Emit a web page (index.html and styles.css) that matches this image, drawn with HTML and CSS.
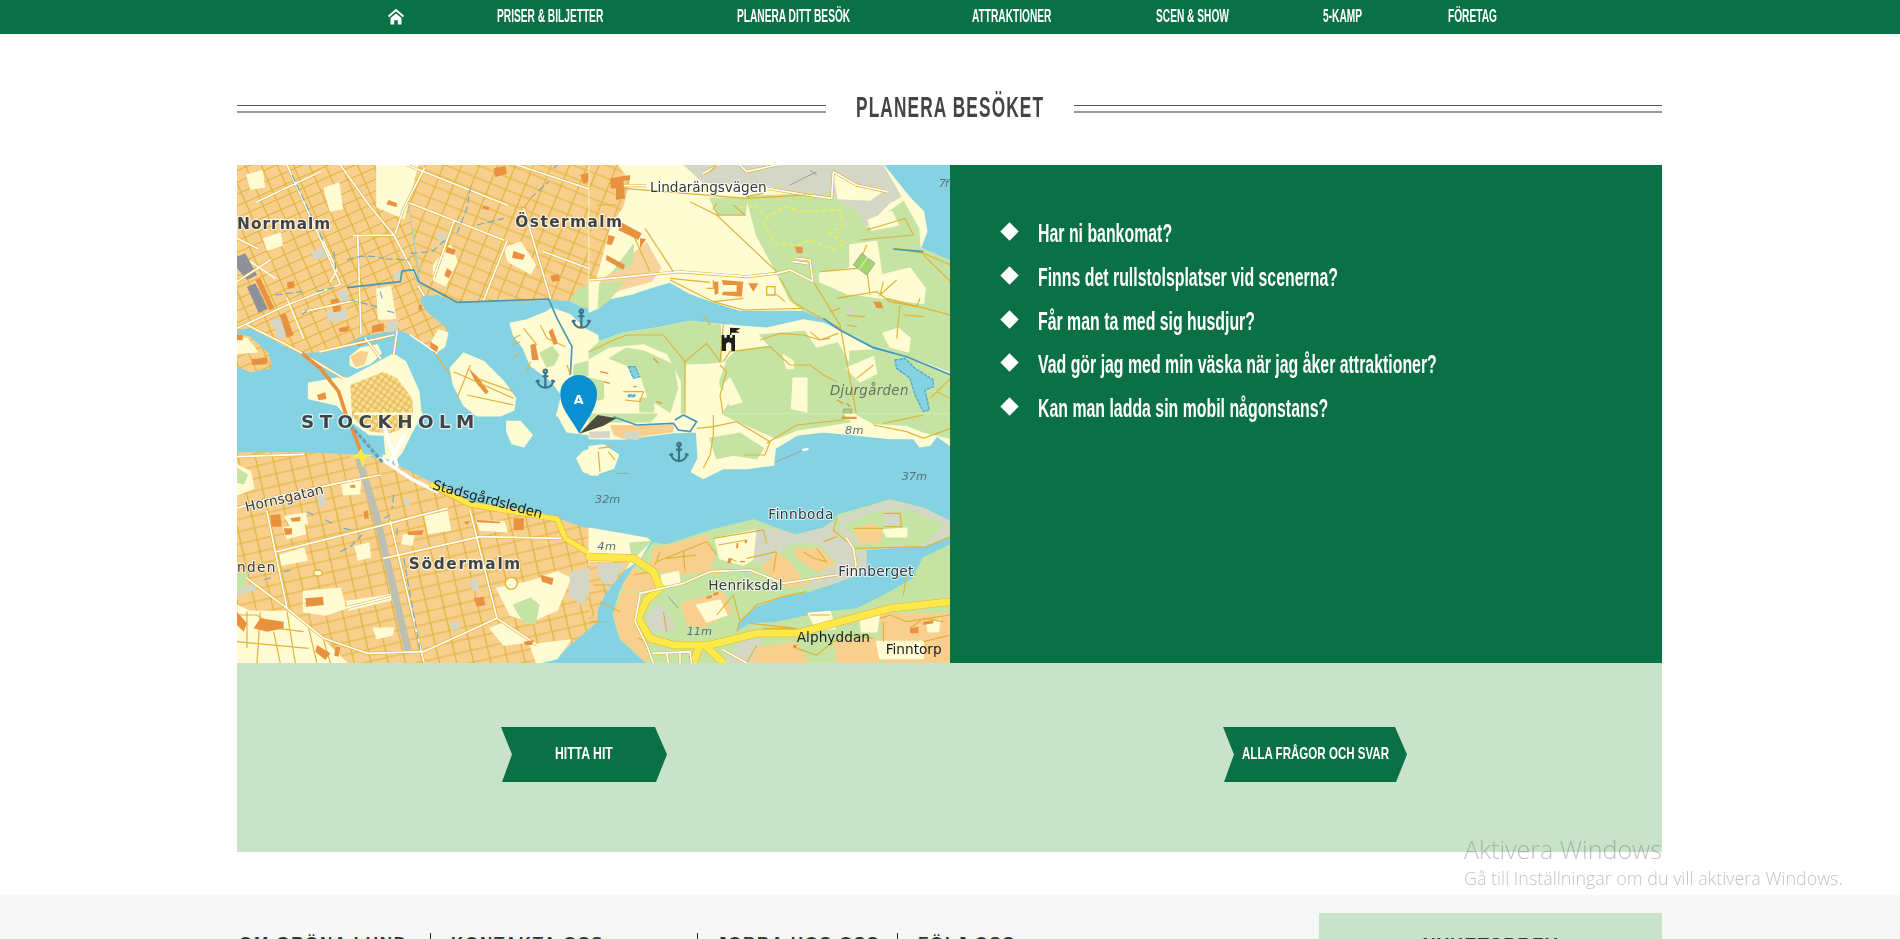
FILE: index.html
```html
<!DOCTYPE html>
<html lang="sv">
<head>
    <meta charset="UTF-8">
    <meta name="viewport" content="width=device-width, initial-scale=1.0">
    <title>Planera besöket</title>
    <link rel="stylesheet" href="styles.css">
</head>
<body>
    <nav class="top-nav">
        <a class="home-link" href="#">
            <svg viewBox="0 0 18 17" width="18" height="17">
                <path d="M1.500 8.500 9 2l7.500 6.500" class="home-roof"/>
                <path d="M3.500 10 9 5.500 14.500 10v6.500h-3.700v-4.300H7.200v4.300H3.500z" class="home-body"/>
            </svg>
        </a>
        <a href="#"><span class="squeeze">PRISER &amp; BILJETTER</span></a>
        <a href="#"><span class="squeeze">PLANERA DITT BESÖK</span></a>
        <a href="#"><span class="squeeze">ATTRAKTIONER</span></a>
        <a href="#"><span class="squeeze">SCEN &amp; SHOW</span></a>
        <a href="#"><span class="squeeze">5-KAMP</span></a>
        <a href="#"><span class="squeeze">FÖRETAG</span></a>
    </nav>

    <main class="content">
        <header class="section-head">
            <div class="rule"></div>
            <h1><span class="squeeze">PLANERA BESÖKET</span></h1>
            <div class="rule"></div>
        </header>

        <section class="info">
            <div class="map">
                <svg viewBox="0 0 2139 1494" width="713" height="498">
                    <defs>
                        <pattern id="gridN" width="44" height="32" patternUnits="userSpaceOnUse" patternTransform="rotate(-24)">
                            <rect width="44" height="32" fill="#f8cf8d"/>
                            <path d="M0 16H44M22 0V32" fill="none" stroke="#dfb338" stroke-width="3.500"/>
                        </pattern>
                        <pattern id="gridO" width="50" height="36" patternUnits="userSpaceOnUse" patternTransform="rotate(22)">
                            <rect width="50" height="36" fill="#f8cf8d"/>
                            <path d="M0 18H50M25 0V36" fill="none" stroke="#dfb338" stroke-width="3.500"/>
                        </pattern>
                        <pattern id="gridS" width="50" height="36" patternUnits="userSpaceOnUse" patternTransform="rotate(-13)">
                            <rect width="50" height="36" fill="#f8cf8d"/>
                            <path d="M0 18H50M25 0V36" fill="none" stroke="#dfb338" stroke-width="3.500"/>
                        </pattern>
                        <pattern id="gridG" width="16" height="16" patternUnits="userSpaceOnUse" patternTransform="rotate(35)">
                            <rect width="16" height="16" fill="#f8dc98"/>
                            <path d="M0 8H16M8 0V16" fill="none" stroke="#dfb338" stroke-width="3"/>
                        </pattern>
                        <symbol id="anchor" viewBox="0 0 60 66" overflow="visible">
                            <circle cx="30" cy="7" r="5.500" class="anchor-line"/>
                            <path d="M30 13V60M20 23H40M4 36c2 16 14 24 26 24s24-8 26-24M4 36l-3 7M4 36l7 4M56 36l3 7M56 36l-7 4" class="anchor-line"/>
                        </symbol>
                        <path id="roadsN" d="M150 0L290 310L310 358M310 0L400 125L470 210L545 350M510 0L810 120M840 0L1082 80M520 115L800 225M860 130L940 400M0 490L150 420L310 358M350 212L470 210M362 210L372 505M562 10L500 130L475 205M650 170L590 340M810 228L740 405M30 480L150 540L195 565L320 640M0 350L100 285M250 560L470 510M480 500L470 570M385 520L430 580M920 260L1082 320M60 110L250 20M200 440L360 405M545 365L560 390M0 220L60 250M260 230L300 315L280 350"/>
                        <path id="roadsG" d="M-2 345L60 340L270 320L470 335L560 325L600 315L670 350M100 62H170M530 70L650 90L725 100L730 20L800 60L890 80M340 25L385 0M450 0L470 20L560 0M620 280L660 285L668 345M610 290L650 295"/>
                        <path id="roadsS" d="M-2 125L200 118M-2 280L120 245L300 205L430 180M90 290L150 580M120 410L420 335L630 280M440 430L730 365L970 370M460 320L560 740M700 290L780 610M30 490L150 580L260 670L390 715L560 710L780 610L900 690M330 578L460 545M250 555L200 570"/>
                        <path id="roadsH" d="M150 535L280 505L360 470L480 465L580 505L740 480M790 400L798 450L790 480M770 370L790 400M150 540L135 620L170 690L190 744M190 715L300 710L305 744M230 715L235 744M270 712V744M400 705L470 744"/>
                        <path id="yellowS" d="M580 208L700 268L960 312L985 370L1082 430"/>
                        <path id="yellowH" d="M1082 560L900 580L750 620L620 655L500 655L360 690L250 690L180 670L145 610L170 555L210 520L190 470L130 430L-2 425M330 690L310 744M350 695L400 744"/>
                    </defs>

                    <rect width="2139" height="1494" class="water"/>

                    <!-- norrmalm, ostermalm -->
                    <g>
                        <path fill="url(#gridN)" d="M0 0H500L545 350L555 392L550 410L575 445L630 490L625 530L600 565L575 545L520 510L490 497L450 500L400 510L370 515L320 545L270 560L200 565L150 548L90 515L40 490L0 495Z"/>
                        <path fill="url(#gridO)" d="M500 0H1082V404L1000 408L940 405L660 415L600 390L555 392Z"/>
                        <path fill="url(#gridN)" d="M0 505L40 515L95 565L105 610L40 622L0 605Z"/>
                        <path class="land" d="M0 525L30 520L60 560L0 565ZM420 0H542L500 160L420 125ZM30 30L75 18L82 65L42 72ZM262 70L305 55L316 130L280 138ZM80 222L130 205L135 240L92 255ZM420 372L460 365L475 460L425 462ZM590 300L640 240L660 290L625 362L590 345ZM802 250L850 232L895 300L880 325L815 290ZM585 530L605 495L632 505L622 545L600 560Z"/>
                        <path class="park" d="M1020 378L1060 355L1082 360V432L1040 425L1000 408Z"/>
                        <path class="land" d="M340 575L370 550L420 540L432 565L400 595L360 610L340 600Z"/>
                        <path class="urban" d="M340 575L370 558L395 560L382 600L355 606Z"/>
                        <path class="land" d="M215 655L300 640L335 640L470 568L505 590L545 680L552 752H330L300 720L215 700Z"/>
                        <path fill="url(#gridG)" d="M340 660L440 620L480 640L525 700L530 752H345Z"/>
                        <path class="land" d="M640 610L680 565L740 590L800 650L835 700L830 735L790 752H720L680 720L650 660ZM820 475L870 465L930 440L945 430L1000 450L1040 490L1082 512V752H960L975 690L945 650L880 600L860 550L830 510Z"/>
                        <path class="park" d="M910 565L945 545L965 570L950 600L930 605ZM1012 600L1055 590L1060 630L1010 640Z"/>
                        <path class="gray-dark" d="M0 275L25 265L60 330L30 345L0 310ZM30 365L55 355L92 430L65 445Z"/>
                        <path class="gray" d="M222 258L262 248L272 275L232 285ZM300 380L332 372L335 410L310 412ZM448 470L482 465L482 498L450 500ZM600 205L625 205L625 228L605 228ZM265 440L330 430L330 465L275 470ZM470 322L490 320L490 345L470 345ZM100 465L130 455L150 512L125 525Z"/>
                        <path class="bld" d="M55 345L70 340L112 430L98 436ZM128 450L146 445L170 510L150 518ZM280 405L304 400L312 438L290 442ZM405 482L440 474L440 498L405 503ZM580 530L604 545L600 560L580 555ZM880 540L895 535L905 585L885 585ZM935 500L946 490L963 535L950 540ZM455 105L480 115L478 126L448 118ZM0 510L16 510L18 526L0 526ZM45 582L90 578L90 598L45 600ZM695 610L722 635L755 680L746 688L715 650ZM630 245L656 255L651 270L625 262ZM630 310L646 320L635 340L622 332ZM830 258L864 270L858 285L825 278ZM305 490L335 482L335 498L308 502ZM240 690L265 682L268 702L245 706ZM150 352L172 348L172 368L152 372ZM770 10L805 2L810 26L775 36ZM1030 30L1082 15L1082 36L1040 56ZM545 420L556 420L555 436L545 436ZM360 530L395 517L395 532L362 545ZM740 122L758 126L754 136L735 130ZM940 332L966 328L968 348L945 350Z"/>

                        <use href="#roadsN" class="casing"/>
                        <use href="#roadsN" class="road"/>
                        <path class="road-thin" d="M40 290L115 340M150 400L200 520M520 510L600 565"/>
                        <path class="street" d="M590 560L640 630"/>
                        <path class="major" d="M195 565L250 610L305 680L328 752"/>
                        <path class="canal" d="M330 368L490 350L495 318L530 315L545 350L660 412L935 402L960 460L1005 545L1000 630"/>
                        <path class="stream" d="M165 30L260 230M290 260L298 325M330 285Q380 265 440 280M445 282L520 285M520 265L585 260L625 225M660 205L690 130L700 70M720 180L800 160M115 390L195 380M240 380L300 365M340 405L420 425M450 438L480 445M430 380L435 400M195 450L210 435M880 100L935 50M950 10L960 0"/>
                        <path class="street" d="M850 565L830 575M828 540L850 530M830 520L850 510M880 590L870 620M990 600L1000 630M650 620L830 700M700 600L660 700M720 640L830 680M690 690L830 720M910 480L930 520L985 545M860 490L900 540M860 130L885 95M850 125L870 130"/>
                    </g>

                    <!-- djurgarden, gardet -->
                    <g transform="translate(1059,0)">
                        <path class="land" d="M-2 0H880L920 50L960 100L1000 140L1010 200L990 250L1082 290V625L950 570L850 540L750 490L700 460L640 435L560 435L450 435L370 410L300 385L240 350L190 365L130 385L60 400L20 430L-2 440Z"/>
                        <path class="land" d="M-2 510L30 530L100 505L200 490L300 470L400 480L530 490L640 465L700 475L750 500L850 555L950 580L1082 635V752H-2Z"/>
                        <path fill="url(#gridO)" d="M-2 0H85L120 50L100 125L60 190L20 340L-2 350Z"/>
                        <path class="urban-soft" d="M100 290L170 230L215 310L185 350L95 375L40 400L30 350Z"/>
                        <path class="park" d="M30 355L100 350L60 400L25 430ZM130 240L70 320L125 300Z"/>
                        <path class="gray" d="M280 0H880L935 95L900 115L830 185L800 140L735 105L650 90L530 62L340 55Z"/>
                        <path class="land" d="M730 20L800 60L880 75L840 105L745 100Z"/>
                        <path class="park" d="M360 100L470 100L465 150L385 150ZM470 95L650 88L735 105L800 140L830 190L940 110L985 190L990 250L1082 290V620L950 570L850 540L750 490L700 460L640 435L600 405L562 325L500 210Z"/>
                        <path class="park" d="M570 330L660 360L665 415L640 430L600 405ZM30 530L100 505L200 490L300 470L390 480L395 590L285 600L280 752H-2V560ZM420 560L540 545L600 600L620 752H400L390 650ZM510 510L640 500L740 530L790 620L800 752H620L600 610ZM780 560L850 555L950 580L1082 635V752H780Z"/>
                        <path class="land" d="M835 165L905 140L925 180L845 195ZM780 240L860 230L875 330L960 310L1005 370L1000 415L890 400L770 385L690 350L690 325L780 310ZM880 505L925 490L960 520L955 560L900 545ZM400 660L420 640L455 710L420 720ZM610 640L650 640L650 740L605 730ZM770 610L850 575L860 625L810 650ZM650 500L720 510L740 530L680 545ZM580 570L610 590L610 610L590 610ZM290 600L360 600L370 650L420 700L390 752H330Z"/>
                        <path class="land" d="M-2 585L60 550L160 540L230 570L270 650L270 752H-2Z"/>
                        <path class="park" d="M60 580L110 550L165 560L250 600L262 670L240 740L175 700L150 620L110 600ZM180 570L220 590L205 620L170 600ZM-2 640L40 650L40 700L-2 710ZM150 700L190 700L190 740L150 740Z"/>
                        <path class="land" d="M400 520L420 480L510 500L490 540L430 560L400 590Z"/>
                        <path class="street" d="M550 380L585 410"/>
                        <use href="#roadsG" class="casing-wide"/>
                        <use href="#roadsG" class="road"/>
                        <path class="street" d="M100 70L470 100L650 90M300 110L380 150L560 320M20 120L80 120M165 190L250 320M130 210L180 320M240 345L370 410L460 435L640 430L750 490M670 350L750 480L800 752M570 340L610 410L640 430M690 320L800 310L830 240M830 310L840 390M880 350L870 390L920 345M740 400L860 380L900 410L980 425L990 400M930 420L920 520M890 400L1082 450M940 450L1000 455M810 225L970 210L945 160L830 195M915 250L1000 265L1082 300M1000 270L1082 350M-2 560L60 530L110 510L220 510L285 590L350 535L390 590L400 480M285 590L285 752M400 590L420 560L540 545L600 600L660 600L700 630L740 650M390 600L410 620L390 690L400 752M510 525L570 505L640 510L690 525L745 505M660 500L690 525L720 520M800 640L850 600M1020 700L1082 640M1040 680L1080 700M340 450L360 480M370 345V370H350M240 340L360 352M370 410L460 400M100 680H160L150 710L105 705M720 440L750 430M770 450L810 455L825 455M770 480L800 485M360 20L380 0M380 115L370 130L385 148M430 120L465 150L380 150M470 95L520 85"/>
                        <path class="trail" d="M450 125L500 125L530 160L580 125L640 140L750 135L760 180L720 205L765 235L730 255L660 225L620 240L555 235L520 170"/>
                        <path class="gray-line" d="M600 60L680 20M660 15L680 30"/>
                        <path class="canal" d="M700 460L750 495L850 548L950 575L1082 630M910 252L1000 260"/>
                        <path class="pond" d="M915 585L945 580L975 610L1030 645L1030 665L1005 675L1018 735L1000 740L975 690L960 640L920 610Z"/>
                        <path class="bld" d="M62 40L120 30L120 45L100 48L105 100L78 105L78 70L62 72ZM90 170L155 205L145 225L85 195ZM50 270L105 300L100 315L48 285ZM150 220L168 222L150 250ZM55 210L75 215L65 240L50 238ZM615 245L638 245L638 265L620 265ZM395 345L460 350L455 395L395 390L400 380L440 380L440 360L400 360ZM475 355L505 355L490 380ZM370 350L385 350L385 385L375 390ZM850 410L872 410L880 430L860 430Z"/>
                        <path class="outline-box" d="M530 365H555V390H530Z"/>
                        <path d="M790 300L815 265L855 295L830 330Z" class="court"/>
                        <path d="M808 312L834 276" class="court-line"/>
                        <path class="gray" d="M770 430L780 420L790 440L780 450Z"/>
                        <path class="dots" d="M30 620L55 625M40 650L60 655M130 665L140 665M120 690L135 695M200 710L215 715M190 580L205 595M740 705L760 715M770 715L780 725"/>
                        <path class="pond" d="M115 605L135 605L150 635L130 640ZM115 690L135 690L135 695L115 695Z"/>
                        <path d="M760 732H785V745H760Z" class="court"/>
                        <path class="castle" d="M395 558V510H403V518H410V510H420V518H427V510H435V558H424V540A8 8 0 0 0 408 540V558Z"/>
                        <path class="castle" d="M420 510V488L452 490L438 497L450 503L424 503V510Z"/>
                    </g>

                    <!-- sodermalm -->
                    <g transform="translate(0,750)">
                        <path fill="url(#gridS)" d="M-2 112L200 112L340 118L430 130L480 150L590 205L700 268L860 298L960 310L1082 350V620L1000 690L960 730L900 745H-2Z"/>
                        <path class="land" d="M-2 570L40 590L150 590L215 640L260 675L330 745H-2ZM1082 95L1040 110L1020 130L1040 170L1082 180ZM810 20L850 20L885 60L860 95L825 85L810 50ZM960 -5L990 50L1082 62V-5Z"/>
                        <path class="land" d="M355 -5L555 -5L525 50L495 110L480 130L440 130L440 90L400 60L345 20Z"/>
                        <path fill="url(#gridG)" d="M345 0H530L500 40L460 55L400 50L360 22Z"/>
                        <path class="water" d="M370 60L440 62L445 120L390 110Z"/>
                        <path class="land" d="M315 205L370 195L368 235L320 240ZM145 305L205 295L210 325L160 332ZM140 340L200 325L205 355L150 370ZM565 305L630 290L640 345L575 355ZM130 420L200 400L210 435L135 450ZM355 395L395 385L400 425L365 435ZM780 520L880 500L960 470L1000 490L960 585L880 620L820 600ZM330 560L460 540L460 555L335 585ZM760 640L800 625L880 680L800 690ZM880 690L1000 675L960 730L900 745ZM200 530L310 520L325 580L265 600L200 590ZM500 360L530 360L525 390L495 385ZM720 320L800 320L810 350L730 345ZM410 640L470 640L465 660L420 670ZM0 150L40 170L50 220L0 240Z"/>
                        <path class="park" d="M830 570L880 550L905 570L895 625L860 620ZM-2 160L30 180L20 205L-2 200ZM-2 480L30 475L20 520L-2 530Z"/>
                        <path class="gray" d="M1000 470L1070 455L1082 500L1035 572L995 540ZM240 240L265 235L268 270L245 278ZM640 625L668 620L668 640L645 648ZM700 490L720 490L725 530L705 525ZM498 250L515 250L518 272L502 272ZM-2 525L50 505L60 525L-2 542Z"/>
                        <path class="rail" d="M365 130L420 310L515 715"/>
                        <use href="#roadsS" class="casing"/>
                        <use href="#roadsS" class="road"/>
                        <path class="road-wide" d="M430 130L520 190L600 230M440 30L480 150M500 60L460 140"/>
                        <path class="stream" d="M470 240L465 280M440 310L460 300M210 290L230 300M265 315L285 325M320 340L345 345M310 410L340 395L375 360M80 495L110 485M140 470L165 465M480 340V360M500 430L550 710"/>
                        <path class="major-short" d="M345 40L372 112"/>
                        <path class="rail-dash" d="M340 30L440 145"/>
                        <use href="#yellowS" class="casing-yellow"/>
                        <use href="#yellowS" class="highway"/>
                        <path class="star" d="M372 100L380 118L410 120L386 130L378 158L368 132L335 122L362 118Z"/>
                        <path class="street" d="M0 600H60L120 640L200 650M30 590V700M70 590L60 745M110 650L130 745M0 680L215 700M150 590L175 745M215 640L240 745M260 675L280 745"/>
                        <path class="bld" d="M100 300L130 298L134 335L104 335ZM205 550L258 545L260 570L208 575ZM70 610L140 620L140 640L90 650L50 640ZM295 695L310 695L305 725L292 722ZM240 690L280 715L265 735L235 710ZM340 210L355 210L355 218L340 218ZM680 320L700 318L690 330ZM720 315L790 320L790 325L720 322ZM830 310H860V345H830ZM510 350L560 345L555 360L515 360ZM710 550L740 545L745 570L720 575ZM0 590L30 625L20 650L0 630ZM140 340L165 340L165 358L145 360ZM160 310L190 305L190 318L165 320ZM860 680L890 675L885 690L865 690ZM910 480L950 490L945 510L915 500ZM380 290L392 285L395 310L383 312ZM825 435H850V445H825ZM800 435H812V455H800Z"/>
                        <path class="gold-circle" d="M230 474A13 9 0 1 1 256 474A13 9 0 1 1 230 474ZM805 505A18 18 0 1 1 841 505A18 18 0 1 1 805 505Z"/>
                    </g>

                    <!-- finnboda, henriksdal -->
                    <g transform="translate(1059,750)">
                        <path class="land" d="M-2 -2H1082V92L1040 62L1020 90L990 95L970 70L900 70L800 60L700 50L620 60L555 100L550 150L470 160L400 160L340 190L305 170L325 130L320 50L250 52L100 72L-2 70Z"/>
                        <path class="park" d="M360 70L450 55L520 100L500 130L430 120L380 130ZM400 -2L760 -2L780 20L620 45L560 70L470 30ZM800 -2H1082V70L1000 50L950 30L850 25ZM-2 -2H200L180 20L60 20L-2 30Z"/>
                        <path class="urban" d="M60 30L250 30L250 52L100 72L70 60Z"/>
                        <path class="gray" d="M-2 50L60 48L60 68L-2 70ZM100 52L150 50L145 75L110 72Z"/>
                        <path class="land" d="M40 90L85 120L70 160L10 180L-2 178V95Z"/>
                        <path class="land" d="M260 25A24 24 0 1 0 308 25A24 24 0 1 0 260 25Z"/>
                        <path class="canal" d="M70 5L140 30L250 25L265 45L300 50L320 20L280 0L255 15"/>
                        <path class="street" d="M370 0V60L360 120L340 160M320 40L370 35L440 20L540 80L525 120L460 120M530 85L620 30L760 15M850 30L950 50L1000 70L1082 40M760 15V0M880 25L1000 0M25 110L30 170M55 110L75 135M25 100L65 95"/>

                        <path class="park" d="M190 385L230 390L350 350L490 315L570 345L620 360L700 340L730 320L745 300L850 270L900 255L1000 280L1082 320V744H170L90 670L70 600L90 530L130 460L150 440Z"/>
                        <path class="land" d="M-2 340L170 370L180 378L150 430L110 460L-2 450Z"/>
                        <path class="park" d="M120 385L180 380L140 420L125 415Z"/>
                        <path fill="url(#gridS)" d="M-2 440L120 440L110 460L50 530L20 590L-2 622Z"/>
                        <path class="gray" d="M20 445L105 445L55 530L25 480Z"/>
                        <path class="urban" d="M95 530L150 535L140 610L170 680L175 744H170L90 670L70 600ZM95 510L130 460L190 480L200 525L105 530Z"/>
                        <path class="urban" d="M190 400L350 360L375 420L360 470L260 480L210 470L180 450Z"/>
                        <path class="land" d="M375 370L500 345L530 385L510 420L460 450L390 430ZM215 480L265 470L270 505L215 510Z"/>
                        <path class="gray" d="M570 345L620 360L700 340L730 320L745 360L770 380L830 410L830 470L750 500L660 525L640 500L700 470L740 440L690 390L630 380L580 400L550 440L490 440L500 340Z"/>
                        <path class="urban" d="M560 410L600 440L650 510L600 520L510 460ZM610 400L690 400L740 450L680 470L620 430Z"/>
                        <path class="gray" d="M745 310L850 270L900 255L1000 280L1082 320V360L1000 395L830 405L790 390L750 350Z"/>
                        <path class="park" d="M760 330L860 290L950 285L1060 330L1000 385L830 400ZM790 385L830 400L830 405L800 405Z"/>
                        <path class="urban" d="M790 340L850 325L880 350L870 385L810 385Z"/>
                        <path class="land" d="M880 345L950 340L950 365L890 365Z"/>
                        <path class="gray" d="M170 600L205 570L230 590L260 640L230 650L180 650ZM880 290L930 295L930 340L880 330Z"/>
                        <path class="urban" d="M270 565L400 530L430 590L340 640L290 630Z"/>
                        <path class="land" d="M320 570L390 555L410 600L350 620Z"/>
                        <path class="water" d="M830 405L920 400L1000 395L1082 365V390L1000 430L970 490L880 540L800 580L700 590L560 620L480 625L440 650L445 625L500 575L580 545L660 530L750 500L830 470Z"/>
                        <path class="park" d="M1000 430L1082 390V545L900 570L960 510Z"/>
                        <path class="land" d="M655 595L720 590L735 640L680 645ZM810 600L870 580L860 650L815 650Z"/>
                        <path class="urban" d="M870 595H1082V744H880ZM470 700L620 680L660 744H470ZM730 680L860 670L870 744H740Z"/>
                        <path class="gray" d="M450 680L520 670L480 744H400Z"/>
                        <path class="land" d="M860 680L1000 680L1000 730L870 730ZM1010 620L1050 615L1045 650L1015 650Z"/>
                        <path class="street" d="M740 310L730 345L770 380M785 400L1000 395M790 340H880M880 295H930L935 335L880 335M370 370L520 345L530 385M385 390L470 375M200 440L350 380L380 420M280 405L285 470M230 430L320 420M185 470L130 480M210 410L195 450M70 510L10 510M30 560L90 590M0 620L50 620M145 670L170 680M470 430L560 410M560 410L550 470M640 410L670 430L710 440L680 400M420 430L440 440M380 600L430 540L450 620M440 650L450 620L500 570L580 545L650 530M220 590L230 650M700 380L740 365M1000 400L1082 365M940 540L950 480L980 480M660 600L720 600M870 610L900 600L950 620L1080 600M880 620V680M960 640L1000 610L1060 620M730 680L780 660L850 670M1000 680L1082 660M620 700L680 720L730 680M500 690L470 744M520 640L620 640L480 625"/>
                        <use href="#yellowH" class="casing-big"/>
                        <use href="#yellowH" class="highway-big"/>
                        <use href="#roadsH" class="casing"/>
                        <use href="#roadsH" class="road"/>
                        <path class="gray-line" d="M560 140L640 105M80 175H115M235 545L265 580"/>
                        <path class="road-tip" d="M640 105L652 102"/>
                        <path class="bld" d="M440 385L446 385L444 400L438 400ZM465 375L472 375L470 385L464 385ZM350 545L365 540L365 548L350 552ZM370 535L385 530L385 538L370 542ZM415 430L425 430L422 445L412 445ZM450 438H465V442H450ZM960 640L985 635L985 655L960 655ZM1000 620L1030 615L1030 625L1000 630ZM610 690L620 690L620 700L610 700ZM755 5H800V12H755Z"/>
                    </g>

                    <!-- anchors, pin, names -->
                    <use href="#anchor" x="1005" y="432" width="56" height="62"/>
                    <use href="#anchor" x="897" y="612" width="56" height="62"/>
                    <use href="#anchor" x="1298" y="832" width="56" height="62"/>

                    <path class="pin-shadow" d="M1027 806L1082 750L1138 760L1100 782Z"/>
                    <path class="pin" d="M1027 806C1000 755 970 735 970 685A55 55 0 0 1 1080 685C1080 735 1050 760 1027 806Z"/>
                    <text x="1025" y="718" class="pin-text" text-anchor="middle">A</text>

                    <text x="0" y="192" class="place" textLength="280">Norrmalm</text>
                    <text x="835" y="187" class="place" textLength="320">Östermalm</text>
                    <text x="192" y="790" class="place city" textLength="520">STOCKHOLM</text>
                    <text x="515" y="1212" class="place" textLength="335">Södermalm</text>
                    <text x="1239" y="82" class="name" textLength="350">Lindarängsvägen</text>
                    <text x="1779" y="690" class="depth big" textLength="235">Djurgården</text>
                    <text x="28" y="1040" class="name" textLength="240" transform="rotate(-13 28 1040)">Hornsgatan</text>
                    <text x="584" y="972" class="name dark" textLength="340" transform="rotate(15 584 972)">Stadsgårdsleden</text>
                    <text x="0" y="1220" class="name" textLength="115">nden</text>
                    <text x="1594" y="1063" class="name" textLength="195">Finnboda</text>
                    <text x="1804" y="1233" class="name" textLength="225">Finnberget</text>
                    <text x="1414" y="1275" class="name" textLength="223">Henriksdal</text>
                    <text x="1679" y="1430" class="name dark" textLength="220">Alphyddan</text>
                    <text x="1946" y="1468" class="name dark" textLength="168">Finntorp</text>
                    <text x="1074" y="1015" class="depth" textLength="76">32m</text>
                    <text x="1994" y="945" class="depth" textLength="76">37m</text>
                    <text x="1824" y="807" class="depth" textLength="56">8m</text>
                    <text x="1081" y="1155" class="depth" textLength="56">4m</text>
                    <text x="1349" y="1410" class="depth" textLength="76">11m</text>
                    <text x="2105" y="65" class="depth" textLength="30">7f</text>
                </svg>
            </div>

            <ul class="faq">
                <li><span class="squeeze">Har ni bankomat?</span></li>
                <li><span class="squeeze">Finns det rullstolsplatser vid scenerna?</span></li>
                <li><span class="squeeze">Får man ta med sig husdjur?</span></li>
                <li><span class="squeeze">Vad gör jag med min väska när jag åker attraktioner?</span></li>
                <li><span class="squeeze">Kan man ladda sin mobil någonstans?</span></li>
            </ul>
        </section>

        <section class="links">
            <a class="arrow-btn btn-find" href="#"><span class="squeeze">HITTA HIT</span></a>
            <a class="arrow-btn btn-faq" href="#"><span class="squeeze">ALLA FRÅGOR OCH SVAR</span></a>
        </section>
    </main>

    <footer class="site-footer">
        <div class="footer-links">
            <a class="col-about" href="#">OM GRÖNA LUND</a>
            <a class="col-contact" href="#">KONTAKTA OSS</a>
            <a class="col-jobs" href="#">JOBBA HOS OSS</a>
            <a class="col-follow" href="#">FÖLJ OSS</a>
        </div>
        <div class="newsletter">NYHETSBREV</div>
    </footer>

    <div class="activate">
        <div class="activate-title">Aktivera Windows</div>
        <div class="activate-sub">Gå till Inställningar om du vill aktivera Windows.</div>
    </div>
</body>
</html>
```

FILE: styles.css
```css
html, body {
    height: 100%;
    overflow: hidden;
}
body {
    margin: 0;
    font-family: "Liberation Sans Narrow", "Liberation Sans", Arial, sans-serif;
    background-color: #ffffff;
}
a {
    color: inherit;
    text-decoration: none;
}
.squeeze {
    display: inline-block;
    white-space: nowrap;
    transform-origin: left center;
}

/* top nav */
.top-nav {
    display: grid;
    grid-template-columns: 110px 240px 235px 184px 167px 125px auto;
    align-items: center;
    height: 32px;
    padding: 0 0 2px 387px;
    background-color: #0a7045;
    color: #ffffff;
    font-size: 18px;
    font-weight: bold;
}
.top-nav .squeeze {
    transform: scaleX(.565);
}
.home-link {
    display: flex;
}
.home-roof {
    fill: none;
    stroke: #ffffff;
    stroke-width: 2;
}
.home-body {
    fill: #ffffff;
}

/* heading */
.content {
    width: 1425px;
    margin-left: 237px;
}
.section-head {
    display: flex;
    align-items: center;
    height: 112px;
    padding-top: 19px;
}
.rule {
    flex: 1;
    height: 5px;
    border-top: 1px solid #555555;
    border-bottom: 2px solid #999999;
}
.section-head h1 {
    width: 188px;
    margin: 0 30px 5px;
    color: #444444;
    font-size: 30px;
    font-weight: bold;
    letter-spacing: 2px;
    line-height: 1;
}
.section-head .squeeze {
    transform: scaleX(.575);
}

/* map and questions */
.info {
    display: grid;
    grid-template-columns: 713px 712px;
    height: 498px;
}
.map {
    display: flex;
    overflow: hidden;
}
.map svg {
    filter: blur(.45px);
}
.faq {
    margin: 0;
    padding: 45px 0 0 50px;
    list-style: none;
    background-color: #0a7045;
    color: #ffffff;
    font-size: 25px;
    font-weight: bold;
}
.faq li {
    display: flex;
    align-items: center;
    gap: 20px;
    height: 43.700px;
}
.faq li::before {
    content: "";
    flex: none;
    width: 13px;
    height: 13px;
    margin: 0 2.500px;
    background-color: #ffffff;
    transform: rotate(45deg);
}
.faq .squeeze {
    padding-top: 4px;
    transform: scaleX(.635);
}

/* map layers */
.water { fill: #85d3e2; }
.land {
    fill: #fffbd2;
    stroke: #fffbd2;
    stroke-width: 5;
    stroke-linejoin: round;
}
.urban { fill: #f8cf8d; }
.urban-soft { fill: #f8d49c; }
.park {
    fill: #c5e4a3;
    stroke: #c5e4a3;
    stroke-width: 5;
    stroke-linejoin: round;
}
.gray { fill: #d5d7c6; }
.gray-dark { fill: #8d929a; }
.bld { fill: #e8913f; }
.street {
    fill: none;
    stroke: #dfb338;
    stroke-width: 3.500;
}
.road, .road-wide, .road-thin, .road-tip {
    fill: none;
    stroke: #ffffff;
    stroke-width: 5;
    stroke-linecap: round;
    stroke-linejoin: round;
}
.casing, .casing-wide, .casing-yellow, .casing-big {
    fill: none;
    stroke: #dfb338;
    stroke-width: 8.500;
    stroke-linejoin: round;
}
.casing-wide { stroke-width: 9; }
.casing-yellow { stroke-width: 19; }
.casing-big { stroke-width: 24; }
.road-wide { stroke-width: 11; }
.road-thin { stroke-width: 4; }
.road-tip { stroke-width: 8; }
.dots {
    fill: none;
    stroke: #e8913f;
    stroke-width: 4;
}
.major, .major-short {
    fill: none;
    stroke: #e8913f;
    stroke-width: 11;
}
.canal {
    fill: none;
    stroke: #4a97b8;
    stroke-width: 5;
}
.stream {
    fill: none;
    stroke: #6cabc8;
    stroke-width: 3.500;
    stroke-dasharray: 22 10;
}
.trail {
    fill: none;
    stroke: #f2ee50;
    stroke-width: 4.500;
    stroke-dasharray: 14 9;
}
.gray-line {
    fill: none;
    stroke: #9a9e9a;
    stroke-width: 3;
}
.pond {
    fill: #85d3e2;
    stroke: #4fa8cf;
    stroke-width: 4;
    stroke-dasharray: 10 3;
}
.court {
    fill: #a3d56d;
    stroke: #a0a8a0;
    stroke-width: 3;
}
.court-line {
    stroke: #e6f2d8;
    stroke-width: 3;
}
.outline-box, .gold-circle {
    fill: #fffbd2;
    stroke: #dfb338;
    stroke-width: 4;
}
.castle { fill: #1e1e1e; }
.rail {
    fill: none;
    stroke: #bcc0b2;
    stroke-width: 22;
}
.rail-dash {
    fill: none;
    stroke: #6b9eb0;
    stroke-width: 9;
    stroke-dasharray: 14 5;
}
.highway {
    fill: none;
    stroke: #ffe94a;
    stroke-width: 15;
    stroke-linejoin: round;
}
.highway-big {
    fill: none;
    stroke: #ffe94a;
    stroke-width: 21;
    stroke-linecap: round;
    stroke-linejoin: round;
}
.star { fill: #ffe94a; }
.anchor-line {
    fill: none;
    stroke: #3d7485;
    stroke-width: 7;
}
.pin { fill: #0a8fd0; }
.pin-shadow { fill: #4c4a3c; }
.pin-text {
    fill: #ffffff;
    font-family: "DejaVu Sans", sans-serif;
    font-size: 38px;
    font-weight: bold;
}
.place, .name, .depth {
    font-family: "DejaVu Sans", sans-serif;
    paint-order: stroke;
    stroke: #ffffff;
    stroke-opacity: .75;
    stroke-linejoin: round;
}
.place {
    fill: #3f4444;
    font-size: 46px;
    font-weight: bold;
    stroke-width: 7;
}
.city { font-size: 55px; }
.name {
    fill: #333a3e;
    font-size: 41px;
    stroke-width: 6;
}
.name.dark {
    fill: #1c1c1c;
    stroke: none;
}
.depth {
    fill: #58707a;
    font-size: 34px;
    font-style: italic;
    stroke: none;
}
.depth.big { font-size: 40px; fill: #6a6f66; }

/* buttons */
.links {
    display: flex;
    gap: 556px;
    align-items: center;
    height: 189px;
    padding: 0 0 6px 264px;
    background-color: #c9e3cb;
    box-sizing: border-box;
}
.arrow-btn {
    display: block;
    flex: none;
    box-sizing: border-box;
    height: 55px;
    line-height: 53px;
    background-color: #0a7045;
    color: #ffffff;
    font-size: 17px;
    font-weight: bold;
    clip-path: polygon(0 0, calc(100% - 12px) 0, 100% 50%, calc(100% - 11px) 100%, 1px 100%, 11px 50%);
}
.arrow-btn .squeeze {
    transform: scaleX(.72);
}
.btn-find {
    width: 166px;
    padding-left: 54px;
}
.btn-faq {
    width: 184px;
    padding-left: 19px;
}
.btn-faq .squeeze {
    transform: scaleX(.68);
}

/* footer */
.site-footer {
    display: flex;
    justify-content: space-between;
    width: 1425px;
    margin-top: 43px;
    padding: 18px 238px 0 237px;
    height: 60px;
    background-color: #f7f7f7;
    color: #333333;
    font-weight: bold;
}
.footer-links {
    display: flex;
    margin-top: 20px;
    height: 40px;
    font-size: 17px;
    letter-spacing: 1.700px;
    white-space: nowrap;
}
.footer-links a {
    box-sizing: border-box;
    line-height: 22px;
}
.col-about { width: 193px; padding-left: 2px; }
.col-contact { width: 267px; padding-left: 20px; border-left: 1px solid #222222; }
.col-jobs { width: 200px; padding-left: 19px; border-left: 1px solid #222222; }
.col-follow { padding-left: 20px; border-left: 1px solid #222222; }
.newsletter {
    box-sizing: border-box;
    width: 343px;
    height: 60px;
    padding-top: 21px;
    background-color: #c9e3cb;
    font-size: 18px;
    letter-spacing: 1.300px;
    text-align: center;
    line-height: 22px;
}

/* the windows watermark lies over the page */
.activate {
    position: fixed;
    left: 1464px;
    top: 833px;
    color: rgba(120, 120, 120, .45);
    font-family: "Open Sans", sans-serif;
    font-weight: 300;
    white-space: nowrap;
}
.activate-title {
    font-size: 25px;
    line-height: 32px;
}
.activate-sub {
    font-size: 17.900px;
    line-height: 26px;
}
```
